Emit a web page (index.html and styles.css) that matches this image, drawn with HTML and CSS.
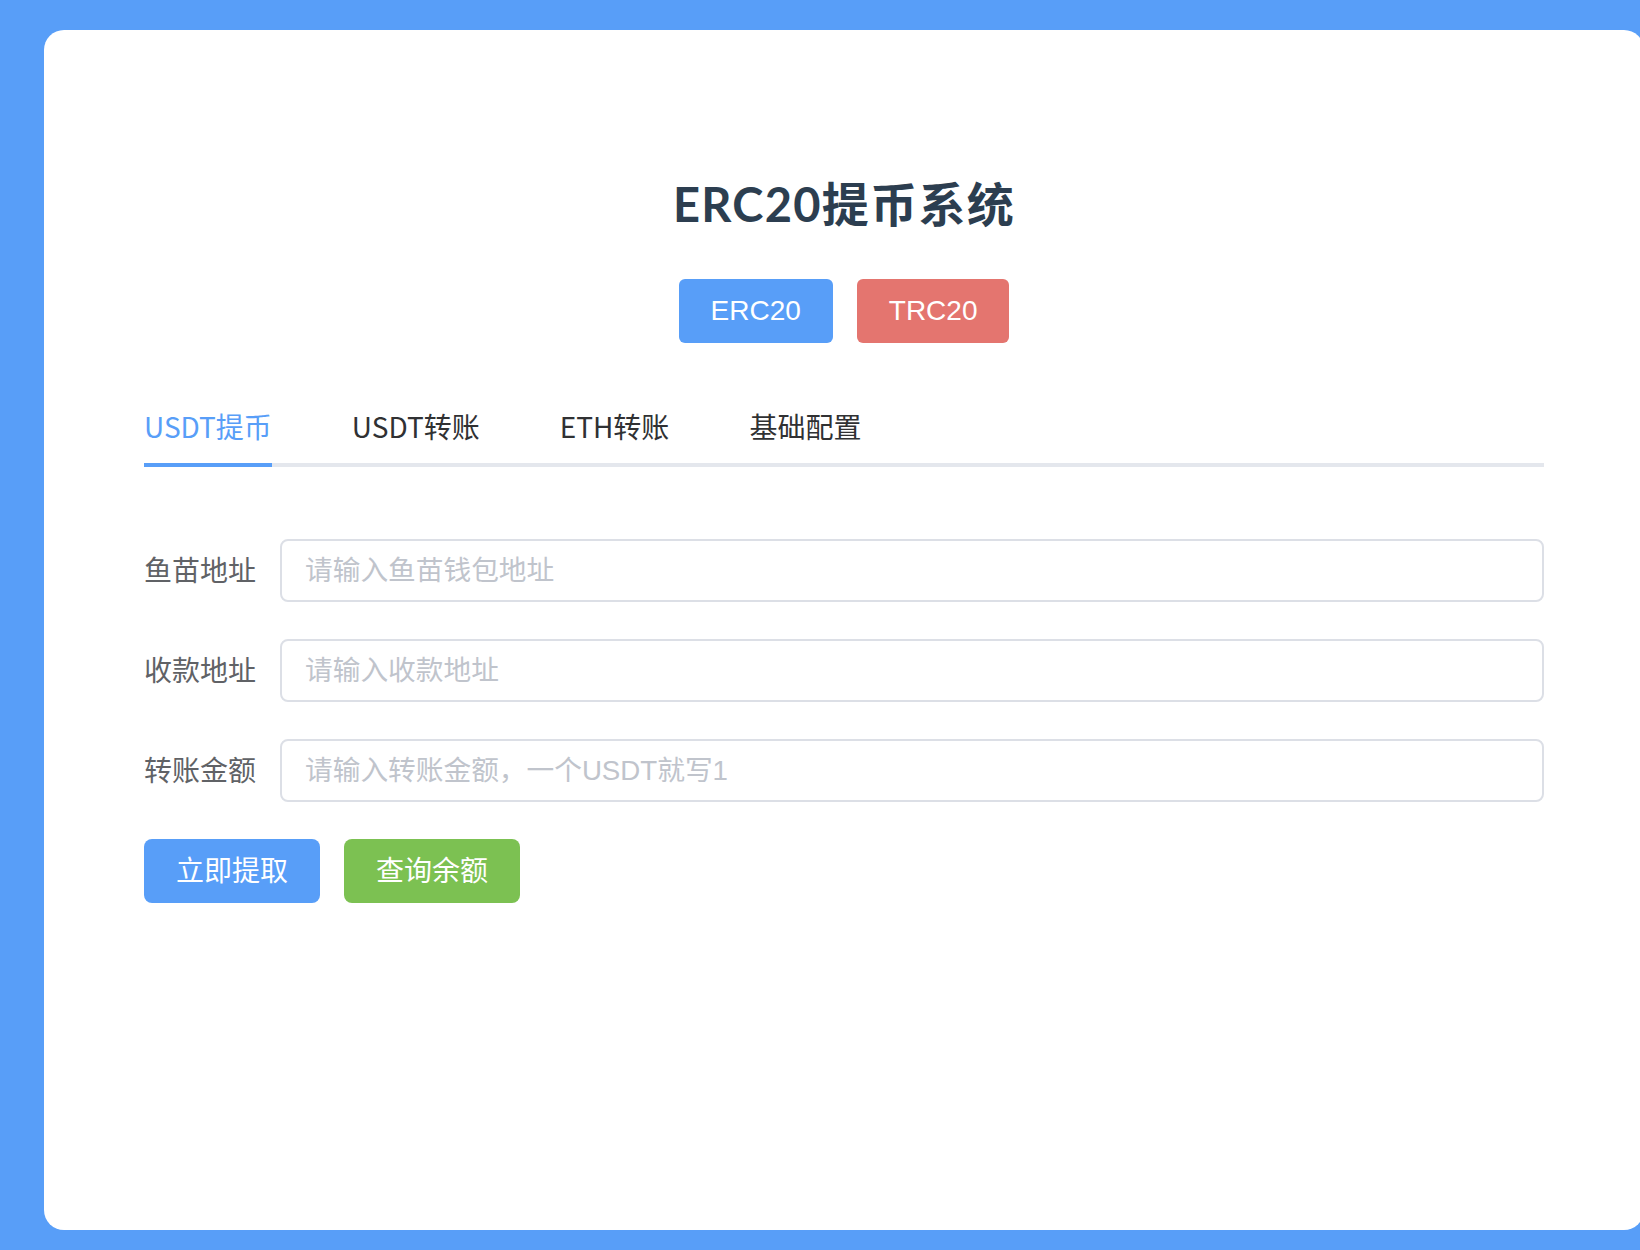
FILE: index.html
```html
<!DOCTYPE html>
<html lang="zh-CN">
<head>
<meta charset="utf-8">
<title>ERC20提币系统</title>
<link rel="stylesheet" href="styles.css">
</head>
<body>
<div class="card">
  <h1 class="title">ERC20提币系统</h1>
  <div class="switch">
    <button class="sw sw-erc">ERC20</button>
    <button class="sw sw-trc">TRC20</button>
  </div>
  <div class="tabs">
    <div class="tab active">USDT提币</div>
    <div class="tab">USDT转账</div>
    <div class="tab">ETH转账</div>
    <div class="tab">基础配置</div>
  </div>
  <form class="form">
    <div class="row">
      <label class="label">鱼苗地址</label>
      <input class="input" type="text" placeholder="请输入鱼苗钱包地址">
    </div>
    <div class="row">
      <label class="label">收款地址</label>
      <input class="input" type="text" placeholder="请输入收款地址">
    </div>
    <div class="row">
      <label class="label">转账金额</label>
      <input class="input" type="text" placeholder="请输入转账金额，一个USDT就写1">
    </div>
    <div class="actions">
      <button type="button" class="btn btn-blue">立即提取</button>
      <button type="button" class="btn btn-green">查询余额</button>
    </div>
  </form>
</div>
</body>
</html>
```
FILE: styles.css
```css
html, body {
  margin: 0;
  padding: 0;
  overflow: hidden;
}
body {
  background: #589ef8;
  height: 1250px;
  font-family: "Liberation Sans", "Noto Sans CJK SC", sans-serif;
}
.card {
  box-sizing: border-box;
  margin: 30px 0 0 44px;
  width: 1600px;
  height: 1200px;
  background: #ffffff;
  border-radius: 20px;
  padding: 0 100px;
  overflow: hidden;
}
.title {
  margin: 144px 0 0;
  line-height: 60px;
  height: 60px;
  text-align: center;
  font-family: Lato, "Noto Sans CJK SC", sans-serif;
  font-weight: 700;
  font-size: 47px;
  letter-spacing: 1.3px;
  color: #2c3e50;
}
.switch {
  display: flex;
  justify-content: center;
  gap: 24px;
  margin-top: 45px;
}
.sw {
  height: 64px;
  padding: 0 32px;
  border: none;
  border-radius: 6px;
  color: #ffffff;
  font-family: "Liberation Sans", sans-serif;
  font-size: 28px;
  cursor: pointer;
}
.sw-erc { background: #589ef8; }
.sw-trc { background: #e4756f; }
.tabs {
  display: flex;
  margin-top: 64px;
  border-bottom: 4px solid #e4e7ed;
  font-family: "Noto Sans CJK SC", sans-serif;
}
.tab {
  position: relative;
  padding: 0 40px 18px;
  line-height: 38px;
  font-size: 28px;
  color: #303133;
}
.tab:first-child { padding-left: 0; }
.tab.active { color: #589ef8; }
.tab.active::after {
  content: "";
  position: absolute;
  left: 0;
  right: 40px;
  bottom: -4px;
  height: 4px;
  background: #589ef8;
}
.form {
  margin-top: 72px;
}
.row {
  display: flex;
  align-items: center;
  margin-bottom: 37px;
}
.row:last-of-type { margin-bottom: 0; }
.label {
  box-sizing: border-box;
  width: 136px;
  padding-right: 24px;
  padding-bottom: 4px;
  font-family: "Noto Sans CJK SC", sans-serif;
  font-size: 28px;
  color: #606266;
}
.input {
  flex: 1;
  box-sizing: border-box;
  height: 63px;
  border: 2px solid #dcdfe6;
  border-radius: 8px;
  padding: 0 23px;
  font-family: "Liberation Sans", "Noto Sans CJK SC", sans-serif;
  font-size: 27.7px;
  color: #606266;
  outline: none;
}
.input::placeholder { color: #c0c4cc; }
.actions {
  display: flex;
  gap: 24px;
  margin-top: 36px;
}
.btn {
  width: 176px;
  height: 64px;
  padding: 0 0 5px;
  border: none;
  border-radius: 8px;
  color: #ffffff;
  font-family: "Noto Sans CJK SC", sans-serif;
  font-size: 28px;
  cursor: pointer;
}
.btn-blue { background: #589ef8; }
.btn-green { background: #7cc152; }
```
